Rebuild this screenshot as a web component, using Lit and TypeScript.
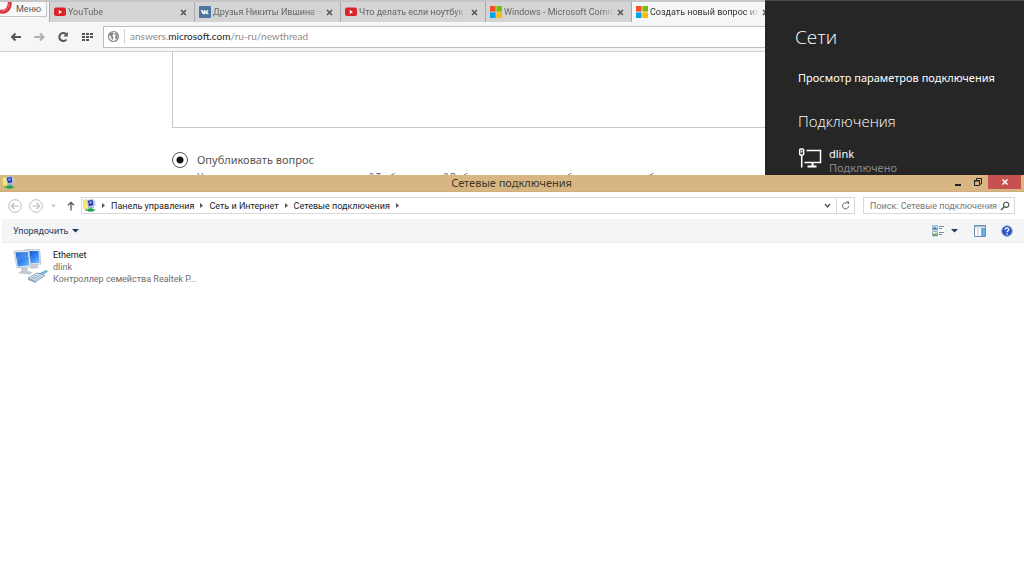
import { LitElement, html, css } from "lit";
import { customElement } from "lit/decorators.js";

const youtube = html`<svg class="fav" viewBox="0 0 12 12"><rect y="1.500" width="12" height="8.500" rx="2" fill="#d9252a"/><path d="M4.800 4v4L8 6z" fill="#fff"/></svg>`;
const vk = html`<svg class="fav" viewBox="0 0 12 12"><rect width="12" height="12" rx="1" fill="#4d76a1"/><path d="M2 4h1.600C3.900 5.300 4.400 6.100 4.800 6.300V4h1.600v1.900C7 5.700 7.600 4.900 7.900 4h1.500c-.2.900-.8 1.700-1.300 2.100.6.400 1.200 1.100 1.600 2.100H8c-.3-.7-.9-1.300-1.600-1.400v1.400h-.7C3.600 8.200 2.200 6.800 2 4z" fill="#fff"/></svg>`;
const microsoft = html`<svg class="fav" viewBox="0 0 12 12"><path fill="#f25022" d="M0 0h5.600v5.600H0z"/><path fill="#7fba00" d="M6.400 0H12v5.600H6.400z"/><path fill="#00a4ef" d="M0 6.400h5.600V12H0z"/><path fill="#ffb900" d="M6.400 6.400H12V12H6.400z"/></svg>`;

const netFolder = html`<svg class="net" viewBox="0 0 14 14">
  <path d="M.8 1h4.200l1 1.500v8H.8z" fill="#f6ea7c" stroke="#d3b850" stroke-width=".6"/>
  <path d="M4.500 1.500l6-1 1.500 6.500-6 1.300z" fill="#1d35b8" stroke="#b9c6dd"/>
  <path d="M6.500 3l2.500-.5.500 2-2.300.8z" fill="#8fb0f0"/>
  <path d="M11 .8l2.200.8.300 5.200-2 1.200z" fill="#c3cbd9"/>
  <path d="M5.500 9l6-.8.800 1.300-6 .6z" fill="#9fb4d2"/>
  <path d="M7.500 9.500h2.300v1.500h3v2H2.500v-2h5z" fill="#3fb86c"/><path d="M5.500 10.500H11v3H5.500z" fill="#22a052"/></svg>`;

@customElement("browser-pane")
class BrowserPane extends LitElement {
  static styles = css`
    :host { display: flex; flex-direction: column; min-width: 0; overflow: hidden; background: #fff; color: #555; font: 9px/12px Roboto, "Noto Sans", sans-serif; }
    button { font: inherit; color: inherit; border: 0; background: none; padding: 0; margin: 0; display: flex; }
    .strip { display: flex; flex: none; height: 22px; border-top: 2px solid #c6c6c6; background: #f5f6f8; box-sizing: border-box; overflow: hidden; }
    .menu { flex: none; align-items: center; align-self: flex-start; width: 47px; height: 15px; margin-right: 2px; border: solid #c4c4c4; border-width: 0 1px 1px 0; background: #f8f8f9; box-sizing: border-box; gap: 4px; }
    .menu svg { width: 12px; height: 12px; align-self: flex-start; }
    .tab { display: flex; flex: none; align-items: center; width: 145px; gap: 2px; padding: 0 6px 0 4px; border-left: 1px solid #aaa; background: #d4d4d4; box-sizing: border-box; color: #666; }
    .tab:nth-child(odd) { width: 146px; }
    .tab.active { background: #f5f6f8; color: #333; }
    .fav { width: 12px; height: 12px; flex: none; }
    .name { flex: 1; min-width: 0; overflow: hidden; white-space: nowrap; mask-image: linear-gradient(to right, #000 88%, transparent); }
    .x { width: 9px; flex: none; }
    .x svg { width: 9px; height: 9px; }
    .bar { display: flex; flex: none; align-items: center; gap: 8px; height: 30px; padding-left: 7px; background: #f5f6f8; border-bottom: 1px solid #cfd0d2; box-sizing: border-box; }
    .bar button svg { width: 16px; height: 16px; }
    .bar button { flex: none; }
    .url { flex: 1; display: flex; align-items: center; height: 22px; margin-right: -2px; border: 1px solid #bfbfbf; background: #fff; box-sizing: border-box; gap: 4px; padding-left: 3px; font-family: Lato, "Noto Sans", sans-serif; font-size: 10px; color: #8c8c8c; white-space: nowrap; }
    .url svg { width: 13px; height: 13px; }
    .addr { border-left: 1px solid #d2d2d2; padding-left: 5px; outline: 0; line-height: 15px; }
    .addr b { font-weight: 400; color: #222; }
    .page { display: flex; flex-direction: column; padding-left: 172px; }
    textarea { height: 76px; margin: 0 -2px 0 0; border: 1px solid #c9c9c9; border-top: 0; padding: 0; box-sizing: border-box; resize: none; background: #fff; outline: 0; }
    .choice { display: flex; align-items: center; gap: 9px; margin-top: 24px; height: 16px; font-family: "Noto Sans", "Open Sans", sans-serif; font-size: 11px; color: #555; }
    input { appearance: none; width: 16px; height: 16px; margin: 0; border: 1px solid #555; border-radius: 50%; background: radial-gradient(circle, #111 3px, transparent 4px); box-sizing: border-box; }
    p { margin: 3px 0 0 25px; white-space: nowrap; color: #666; }
  `;
  tabs = [
    { icon: youtube, name: "YouTube" },
    { icon: vk, name: "Друзья Никиты Ившина – 12" },
    { icon: youtube, name: "Что делать если ноутбук не" },
    { icon: microsoft, name: "Windows - Microsoft Community" },
    { icon: microsoft, name: "Создать новый вопрос или", active: true },
  ];
  render() {
    return html`
      <div class="strip">
        <button class="menu"><svg viewBox="0 0 12 12"><path d="M0 9C5 11.500 10 7.500 9.800 0" fill="none" stroke="#dc3540" stroke-width="4"/><path d="M2 9C6 9.500 9 6 9.200 1" fill="none" stroke="#f0727a" stroke-width="1"/></svg>Меню</button>
        ${this.tabs.map((t) => html`<div class="tab ${t.active ? "active" : ""}">${t.icon}<span class="name">${t.name}</span>
          <button class="x" aria-label="Закрыть вкладку"><svg viewBox="0 0 9 9"><path d="M2 2l5 5M7 2L2 7" stroke="#555" stroke-width="1.500"/></svg></button></div>`)}
      </div>
      <div class="bar">
        <button aria-label="Назад"><svg viewBox="0 0 16 16"><path d="M14 8H5M8.500 4.500L5 8l3.500 3.500" fill="none" stroke="#555" stroke-width="2"/></svg></button>
        <button aria-label="Вперёд"><svg viewBox="0 0 16 16"><path d="M3 8h9M9 4.500L12.500 8 9 11.500" fill="none" stroke="#b0b0b0" stroke-width="2"/></svg></button>
        <button aria-label="Обновить"><svg viewBox="0 0 16 16"><path d="M11.500 10.500A4 4 0 1 1 11 5" fill="none" stroke="#555" stroke-width="2"/><path d="M12.800 3v4.500H8.300z" fill="#555"/></svg></button>
        <button aria-label="Экспресс-панель"><svg viewBox="0 0 16 16"><path fill="#555" d="M3 4h3v2H3zM7 4h3v2H7zM11 4h3v2h-3zM3 7h3v2H3zM7 7h3v2H7zM11 7h3v2h-3zM3 10h3v2H3zM7 10h3v2H7z"/></svg></button>
        <div class="url"><svg viewBox="0 0 13 13"><circle cx="6.500" cy="6.500" r="5" fill="#fff" stroke="#888" stroke-width="1.200"/><path d="M3 3l3-1 .5 2-1.200 1.800L6.500 7 5.800 10 4.500 9 4 6.500 2 5zM7.500 2.500l3 2v3.800L8.700 9.800 8 7 9 5.500 7.500 4.500z" fill="#888"/></svg>
          <div class="addr" role="textbox" aria-label="Адрес" contenteditable="true">answers.<b>microsoft.com</b>/ru-ru/newthread</div></div>
      </div>
      <div class="page">
        <textarea aria-label="Текст вопроса"></textarea>
        <label class="choice"><input type="radio" name="kind" checked>Опубликовать вопрос</label>
        <p>Нужны сведения или помощь экспертов? Требуется ответ? Выберите этот вариант, чтобы получить от сообщества</p>
      </div>`;
  }
}

@customElement("networks-panel")
class NetworksPanel extends LitElement {
  static styles = css`
    :host { display: block; background: #262626; color: #fff; border-top: 1px solid #4a4a4a; box-sizing: border-box; overflow: hidden; padding: 22px 0 0 30px; font: 11px/14px "Noto Sans", "Open Sans", sans-serif; }
    h1 { margin: 0; font-family: "Open Sans", sans-serif; font-size: 19px; line-height: 28px; font-weight: 300; }
    .body { padding-left: 3px; }
    a { display: block; margin-top: 20px; color: #fff; text-decoration: none; white-space: nowrap; }
    h2 { margin: 26px 0 0; font-family: "Open Sans", sans-serif; font-size: 15px; line-height: 20px; font-weight: 300; }
    button { display: flex; gap: 7px; margin: 16px 0 0; padding: 0; border: 0; background: none; font: inherit; color: #fff; text-align: left; }
    svg { width: 24px; height: 22px; }
    small { display: block; font-size: 11px; color: #868686; }
  `;
  render() {
    return html`<h1>Сети</h1>
      <div class="body">
        <a href="#">Просмотр параметров подключения</a>
        <h2>Подключения</h2>
        <button><svg viewBox="0 0 24 22" fill="none" stroke="#fff"><path d="M8.500 3.500H22.500V15.500H6.500" stroke-width="1.500"/><path d="M14.500 16v3M9.500 19.500h9" stroke-width="2"/><rect x="1.700" y="2" width="4" height="6" rx="1" stroke-width="1.400"/><path d="M3.700 3.500v2M3.700 8v12.500" stroke-width="1.500"/></svg>
          <span>dlink<small>Подключено</small></span></button>
      </div>`;
  }
}

@customElement("explorer-window")
class ExplorerWindow extends LitElement {
  static styles = css`
    :host { display: flex; flex-direction: column; background: #fff; color: #1c1c1c; font: 9px/12px Roboto, "Noto Sans", sans-serif; overflow: hidden; }
    button { font: inherit; color: inherit; border: 0; background: none; padding: 0; margin: 0; display: flex; align-items: center; }
    .title { display: grid; grid-template-columns: 1fr auto 1fr; height: 17px; background: #d8b684; border-bottom: 1px solid #d0ae7b; box-sizing: border-box; padding: 0 3px 0 2px; }
    .title h1 { margin: 0; font-family: "Noto Sans", "Open Sans", sans-serif; font-size: 11px; line-height: 16px; font-weight: 400; color: #3f3728; }
    .net { width: 13px; height: 13px; flex: none; }
    .title .net { margin-top: 1px; }
    .ctl { display: flex; justify-content: flex-end; height: 14px; }
    .ctl button { width: 20px; justify-content: center; }
    .ctl svg { width: 10px; height: 10px; }
    .ctl .close { width: 33px; background: #c75050; }
    .nav { display: flex; align-items: center; height: 27px; padding: 0 9px 0 8px; box-sizing: border-box; }
    .hist { gap: 7px; display: flex; align-items: center; margin-right: 3px; }
    .hist svg { width: 14px; height: 14px; display: block; }
    .hist .drop, .hist .drop svg { width: 7px; }
    .path { display: flex; flex: 1; align-items: center; gap: 5px; height: 17px; border: 1px solid #d9d9d9; padding-left: 1px; box-sizing: border-box; }
    .path a { color: inherit; text-decoration: none; white-space: nowrap; }
    .path .sep { width: 5px; height: 7px; }
    .path .end { display: flex; align-self: stretch; margin-left: auto; }
    .path .end button { width: 18px; justify-content: center; }
    .path .end button + button { border-left: 1px solid #d9d9d9; }
    .path .end svg { width: 9px; height: 9px; }
    .find { display: flex; align-items: center; width: 152px; height: 17px; margin-left: 8px; border: 1px solid #d9d9d9; padding: 0 4px 0 6px; box-sizing: border-box; }
    .find input { flex: 1; min-width: 0; border: 0; padding: 0; outline: 0; font: inherit; background: none; }
    .find input::-webkit-search-cancel-button { display: none; }
    .find input::placeholder { color: #777; opacity: 1; }
    .find svg { width: 10px; height: 10px; flex: none; }
    .tools { display: flex; align-items: center; height: 24px; margin-left: 2px; padding: 0 11px; background: #f4f5f7; border-bottom: 1px solid #ebecee; box-sizing: border-box; color: #1e395b; }
    .tools .org { gap: 4px; margin-right: auto; }
    .tools svg { width: 12px; height: 12px; display: block; }
    .tools .tri { width: 7px; height: 7px; }
    .tools .view { gap: 7px; margin-right: 16px; }
    .tools .pane { margin-right: 15px; }
    .items { display: flex; flex-wrap: wrap; padding: 6px 13px; }
    .item { align-items: flex-start; gap: 5px; text-align: left; color: #6e6e6e; }
    .item svg { width: 35px; height: 35px; flex: none; }
    .item span { display: block; white-space: nowrap; }
    .item .name { color: #101010; }
  `;
  render() {
    const sep = html`<svg class="sep" viewBox="0 0 5 7"><path d="M1 1l3 2.500L1 6z" fill="#555"/></svg>`;
    const tri = html`<svg class="tri" viewBox="0 0 7 7"><path d="M0 2h7L3.500 5.500z" fill="#1e395b"/></svg>`;
    return html`
      <header class="title">${netFolder}<h1>Сетевые подключения</h1>
        <div class="ctl">
          <button aria-label="Свернуть"><svg viewBox="0 0 10 10"><path d="M2 8h6" stroke="#222" stroke-width="2"/></svg></button>
          <button aria-label="Восстановить"><svg viewBox="0 0 10 10" fill="none" stroke="#222"><path d="M1.500 3.500h5v5h-5z"/><path d="M3.500 3V1.500h5V7H7M1 4h6"/></svg></button>
          <button class="close" aria-label="Закрыть"><svg viewBox="0 0 10 10"><path d="M2.500 2.500l5 5M7.500 2.500l-5 5" stroke="#fff" stroke-width="1.500"/></svg></button>
        </div>
      </header>
      <nav class="nav">
        <div class="hist">
          <button aria-label="Назад"><svg viewBox="0 0 14 14" fill="none" stroke="#bdbdbd"><circle cx="7" cy="7" r="6.300"/><path d="M10.500 7h-7M6.300 4L3.500 7l2.800 3" stroke-width="1.200"/></svg></button>
          <button aria-label="Вперёд"><svg viewBox="0 0 14 14" fill="none" stroke="#bdbdbd"><circle cx="7" cy="7" r="6.300"/><path d="M3.500 7h7M7.700 4l2.800 3-2.800 3" stroke-width="1.200"/></svg></button>
          <button class="drop" aria-label="Журнал"><svg viewBox="0 0 7 14"><path d="M1 5.500h5L3.500 8.500z" fill="#c4c4c4"/></svg></button>
          <button aria-label="Вверх"><svg viewBox="0 0 14 14" fill="none" stroke="#555" stroke-width="1.300"><path d="M7 11.500v-8M4 6.300l3-3 3 3"/></svg></button>
        </div>
        <div class="path">${netFolder}${sep}<a href="#">Панель управления</a>${sep}<a href="#">Сеть и Интернет</a>${sep}<a href="#">Сетевые подключения</a>${sep}
          <div class="end">
            <button aria-label="Предыдущие расположения"><svg viewBox="0 0 9 9"><path d="M2 3l2.500 3L7 3" fill="none" stroke="#555" stroke-width="1.400"/></svg></button>
            <button aria-label="Обновить"><svg viewBox="0 0 9 9"><path d="M7.500 5A3 3 0 1 1 6 2.300" fill="none" stroke="#666"/><path d="M5 .5h3v3z" fill="#666"/></svg></button>
          </div>
        </div>
        <label class="find"><input type="search" aria-label="Поиск" placeholder="Поиск: Сетевые подключения"><svg viewBox="0 0 10 10" fill="none" stroke="#555"><circle cx="6.200" cy="3.800" r="2.600" stroke-width="1.100"/><path d="M4.300 5.700L1 9" stroke-width="1.500"/></svg></label>
      </nav>
      <div class="tools">
        <button class="org">Упорядочить${tri}</button>
        <button class="view" aria-label="Представление"><svg viewBox="0 0 12 12"><path d="M.5.500h5v4.500h-5zM.5 6.500h5V11h-5z" fill="#dfeaf5" stroke="#8ba0b8" stroke-width=".8"/><path d="M1 3l2-1.500L5 3.500v1H1z" fill="#3a84c4"/><path d="M1 9h4v1.700H1z" fill="#3f9c4c"/><path d="M3 8h2v1.500H3z" fill="#e0b53c"/><path d="M7 1.500h5M7 3.500h3M7 7.500h5M7 9.500h3" stroke="#7c8da1"/></svg>${tri}</button>
        <button class="pane" aria-label="Область просмотра"><svg viewBox="0 0 12 12"><path d="M.5.500h11v11H.5z" fill="#fff" stroke="#6b8bae"/><path d="M1 1h10v1.500H1z" fill="#a9c3dd"/><path d="M7 3h4v8H7z" fill="#64aee8"/><path d="M4 3v8" stroke="#b5c7d8"/></svg></button>
        <button aria-label="Справка"><svg viewBox="0 0 12 12"><circle cx="6" cy="6" r="5.300" fill="#2a55c0" stroke="#8ea6cf" stroke-width="1"/><path d="M4.200 4.700c0-2.400 3.800-2.200 3.600 0C7.700 5.900 6 5.900 6 7.300M6 8.300v1.400" fill="none" stroke="#fff" stroke-width="1.300"/></svg></button>
      </div>
      <main class="items">
        <button class="item">
          <svg viewBox="0 0 35 35">
            <defs><linearGradient id="scr" x1="0" y1="0" x2="1" y2="1"><stop offset="0" stop-color="#0d3fc0"/><stop offset=".5" stop-color="#2d7cf0"/><stop offset="1" stop-color="#7cc4ff"/></linearGradient></defs>
            <path d="M17 16l8-.5 1 3.500-8 1z" fill="#c9ced6"/>
            <path d="M11.500.800L26.500.500l1.500 14.500-13 1z" fill="#e8ecf2" stroke="#b3bccb" stroke-width=".8"/><path d="M13 2.300L25.500 2l1.200 11.800L16 14.500z" fill="url(#scr)"/>
            <path d="M8 18h6l1 4 5 1.500-3 2-11-1-.5-1.500 3-1z" fill="#c3cad4"/>
            <path d="M1 2L16 1.500l2 16.500L4 19z" fill="#edf1f6" stroke="#b3bccb" stroke-width=".8"/><path d="M2.500 3.500L14.800 3l1.700 13.500L5 17.500z" fill="url(#scr)"/>
            <path d="M3 3.500L14.500 3l.7 5C10 9 6 11 4.500 14z" fill="#6ba9f5" opacity=".45"/>
            <path d="M25 25.500l8-4 1.500 1-8 5" fill="#7fc4e8" stroke="#5c9cc0" stroke-width=".8"/>
            <path d="M15 29l9-5 8 2.500-9 6z" fill="#dbe6ef" stroke="#7b93a8" stroke-width=".8"/>
            <path d="M18 29l6-3.200 5 1.400-6 3.800z" fill="#91adc4"/><path d="M19.500 29.800l6-3.500M21.500 30.500l6-3.500" stroke="#eef4f8" stroke-width=".8"/><path d="M15 29v2l8 3v-1.500z" fill="#8fa5b8"/>
          </svg>
          <span><span class="name">Ethernet</span><span>dlink</span><span>Контроллер семейства Realtek P...</span></span>
        </button>
      </main>`;
  }
}

@customElement("app-root")
class AppRoot extends LitElement {
  static styles = css`
    :host { display: grid; grid-template: 175px 1fr / minmax(0, 1fr) 259px; min-height: 100vh; background: #fff; }
    explorer-window { grid-column: 1 / -1; }
  `;
  render() {
    return html`<browser-pane></browser-pane><networks-panel></networks-panel><explorer-window></explorer-window>`;
  }
}
